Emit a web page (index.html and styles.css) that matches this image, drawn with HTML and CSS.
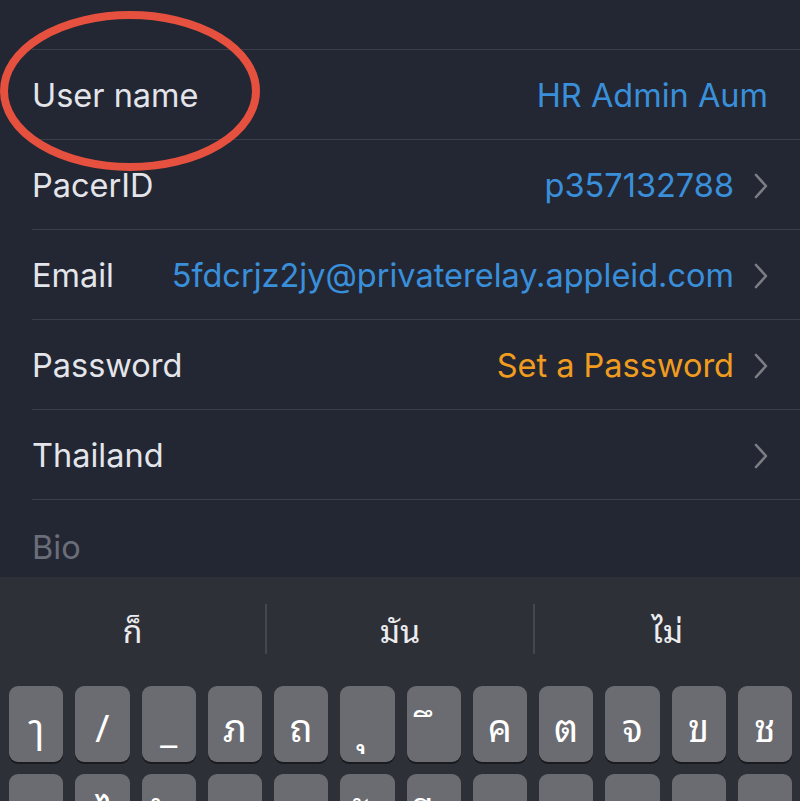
FILE: index.html
```html
<!DOCTYPE html>
<html>
<head>
<meta charset="utf-8">
<link rel="stylesheet" href="styles.css">
</head>
<body>
<div class="screen">
  <div class="list">
    <div class="row"><span class="label">User name</span><span class="value blue">HR Admin Aum</span></div>
    <div class="row"><span class="label">PacerID</span><span class="value blue">p357132788</span><span class="chev"><svg width="14" height="26" viewBox="0 0 14 26"><path d="M2 2 L12 13 L2 24" fill="none" stroke="currentColor" stroke-width="2.6" stroke-linecap="round" stroke-linejoin="round"/></svg></span></div>
    <div class="row"><span class="label">Email</span><span class="value blue">5fdcrjz2jy@privaterelay.appleid.com</span><span class="chev"><svg width="14" height="26" viewBox="0 0 14 26"><path d="M2 2 L12 13 L2 24" fill="none" stroke="currentColor" stroke-width="2.6" stroke-linecap="round" stroke-linejoin="round"/></svg></span></div>
    <div class="row"><span class="label">Password</span><span class="value orange">Set a Password</span><span class="chev"><svg width="14" height="26" viewBox="0 0 14 26"><path d="M2 2 L12 13 L2 24" fill="none" stroke="currentColor" stroke-width="2.6" stroke-linecap="round" stroke-linejoin="round"/></svg></span></div>
    <div class="row"><span class="label">Thailand</span><span class="value"></span><span class="chev"><svg width="14" height="26" viewBox="0 0 14 26"><path d="M2 2 L12 13 L2 24" fill="none" stroke="currentColor" stroke-width="2.6" stroke-linecap="round" stroke-linejoin="round"/></svg></span></div>
    <div class="row bio"><span class="label muted">Bio</span></div>
  </div>
  <div class="keyboard">
    <div class="suggest">
      <div class="sug">ก็</div>
      <div class="sug div">มัน</div>
      <div class="sug div">ไม่</div>
    </div>
    <div class="keys">
      <div class="key">ๅ</div><div class="key">/</div><div class="key">_</div><div class="key">ภ</div><div class="key">ถ</div><div class="key">ุ</div><div class="key">ึ</div><div class="key">ค</div><div class="key">ต</div><div class="key">จ</div><div class="key">ข</div><div class="key">ช</div>
      <div class="key">ๆ</div><div class="key">ไ</div><div class="key">ำ</div><div class="key">พ</div><div class="key">ะ</div><div class="key">ั</div><div class="key">ี</div><div class="key">ร</div><div class="key">น</div><div class="key">ย</div><div class="key">บ</div><div class="key">ล</div>
    </div>
  </div>
  <svg class="circle" width="270" height="180" viewBox="0 0 270 180"><ellipse cx="130" cy="91" rx="126" ry="76" fill="none" stroke="#e5503f" stroke-width="8"/></svg>
</div>
</body>
</html>
```
FILE: styles.css
```css
html, body {
  margin: 0;
  padding: 0;
  background: #222733;
}
.screen {
  position: relative;
  width: 800px;
  height: 801px;
  overflow: hidden;
  background: #222733;
  font-family: "Inter", "Noto Sans", sans-serif;
}
.list {
  padding-top: 49px;
}
.row {
  margin-left: 32px;
  height: 90px;
  border-top: 1px solid #3a3f4b;
  box-sizing: border-box;
  display: flex;
  align-items: center;
  padding-right: 32px;
  font-size: 32.5px;
  padding-top: 2px;
}
.row.bio {
  height: 78px;
  padding-top: 18px;
}
.label {
  color: #e4e5ea;
  flex: 0 0 auto;
}
.muted {
  color: #6b6e78;
}
.value {
  flex: 1 1 auto;
  text-align: right;
  white-space: nowrap;
}
.blue { color: #3a8fdb; }
.orange { color: #f09c1f; }
.chev {
  flex: 0 0 auto;
  width: 14px;
  margin-left: 20px;
  color: #7c7e84;
  display: flex;
  align-items: center;
}
.keyboard {
  height: 224px;
  background: #2e3037;
}
.suggest {
  display: flex;
  height: 103px;
  align-items: center;
}
.sug {
  flex: 1 1 0;
  height: 50px;
  display: flex;
  align-items: center;
  justify-content: center;
  color: #ececef;
  font-size: 32px;
  font-family: "Noto Sans Thai Looped", "Noto Sans Thai", "Loma", "Garuda", "Tlwg Typo", sans-serif;
}
.sug.div {
  border-left: 2px solid #44474e;
}
.keys {
  display: grid;
  grid-template-columns: repeat(12, 1fr);
  grid-auto-rows: 76px;
  column-gap: 12px;
  row-gap: 12px;
  padding: 6px 8px 0 9px;
}
.key {
  background: #6b6c71;
  border-radius: 9px;
  box-shadow: 0 2px 0 #1a1b1f;
  display: flex;
  align-items: center;
  justify-content: center;
  color: #ffffff;
  font-size: 38px;
  font-family: "Noto Sans Thai Looped", "Noto Sans Thai", "Loma", "Garuda", "Tlwg Typo", sans-serif;
}
.circle {
  position: absolute;
  left: 0;
  top: 0;
}
```
